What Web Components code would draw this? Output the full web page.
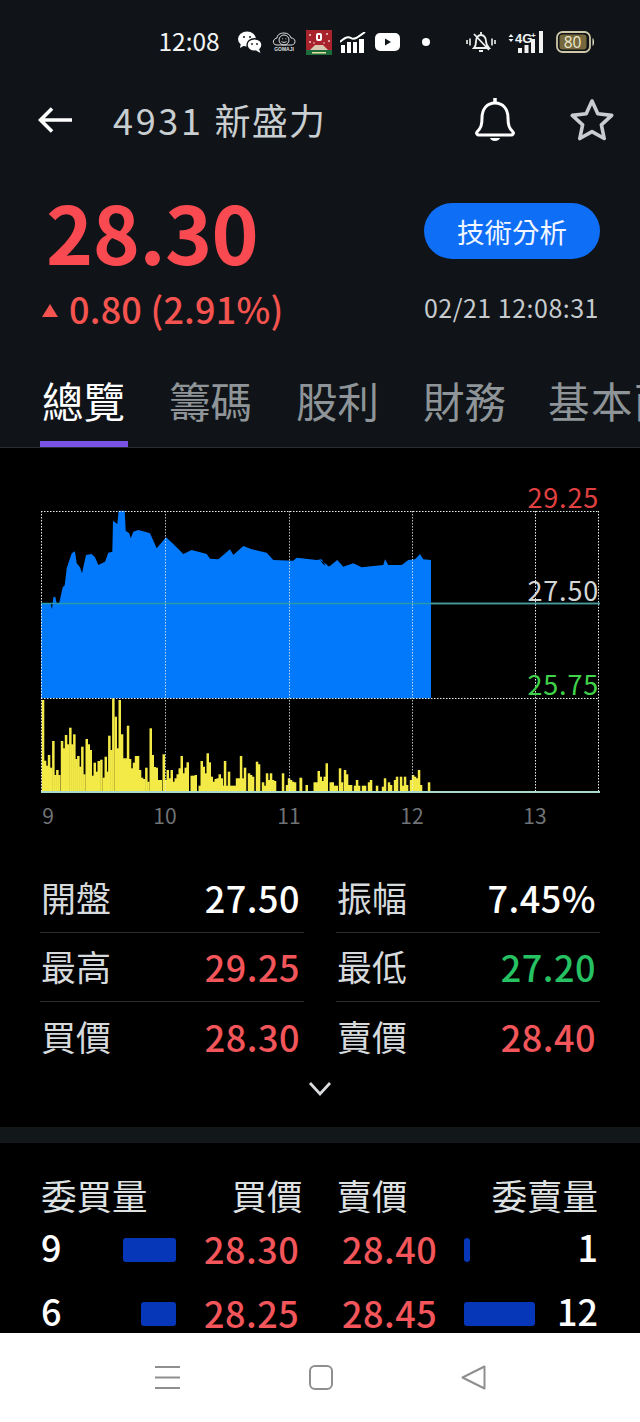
<!DOCTYPE html>
<html lang="zh-Hant"><head><meta charset="utf-8"><title>4931 新盛力</title>
<style>
html,body{margin:0;padding:0;background:#000}
body{width:640px;height:1422px;overflow:hidden;display:flex;flex-direction:column;font-family:"Noto Sans CJK TC","Noto Sans",sans-serif;color:#fff}
</style></head><body>
<status-bar></status-bar>
<stock-header></stock-header>
<tab-bar></tab-bar>
<stock-chart></stock-chart>
<stat-grid></stat-grid>
<order-book></order-book>
<nav-bar></nav-bar>
<script>
const el=(name,html)=>customElements.define(name,class extends HTMLElement{constructor(){super();this.attachShadow({mode:'open'}).innerHTML=typeof html==='function'?html():html}});

el('status-bar',`<style>
:host{display:flex;flex:none;align-items:center;height:84px;box-sizing:border-box;background:#101418;padding:0 0 0 158.500px;color:#fff}
.t{font-size:24.500px;width:79.500px;line-height:1;color:#f2f4f4;margin-top:-1px}
svg{display:block;flex:none}
</style>
<span class="t">12:08</span>
<svg width="24" height="22" viewBox="0 0 24 22" fill="#fff"><ellipse cx="9" cy="8" rx="9" ry="7.5"/><path d="M3 12l-1 5 5-3z"/><ellipse cx="16.5" cy="14" rx="7.5" ry="6.3" stroke="#101418" stroke-width="1.4"/><path d="M21 18l1.5 4-4.500-2.500z"/><circle cx="6" cy="6" r="1" fill="#101418"/><circle cx="12" cy="6" r="1" fill="#101418"/><circle cx="14" cy="13" r=".9" fill="#101418"/><circle cx="19" cy="13" r=".9" fill="#101418"/></svg>
<svg style="margin-left:10px" width="24" height="24" viewBox="0 0 24 24" fill="none" stroke="#ddd" stroke-width="1"><path d="M5 15c-3 0-4-2-3.500-4S4 8 5 8c0-3 3-5 7-5s6 2 7 5c2 0 4 1 4 3.500S21 15 19 15z"/><circle cx="12" cy="10" r="5"/><path d="M9.500 11.500c1.500 1.200 3.500 1.200 5 0M10 8.800h.8M13.500 8.800h.8"/><text x="12" y="21" font-size="5" font-weight="700" fill="#ddd" stroke="none" text-anchor="middle" font-family="Liberation Sans">GOMAJI</text></svg>
<svg style="margin-left:10px" width="26" height="25" viewBox="0 0 26 25"><rect width="26" height="25" fill="#a8232c"/><rect y="20" width="26" height="5" fill="#1c6b3a"/><path d="M4 20l5-5h8l5 5z" fill="#d9c9b0"/><rect x="10" y="3" width="6" height="8" rx="2" fill="#fff"/><rect x="12" y="5" width="2" height="4" fill="#a8232c"/><g fill="#f2d0d0"><circle cx="4" cy="5" r="1"/><circle cx="21" cy="4" r="1"/><circle cx="23" cy="11" r="1"/><circle cx="4" cy="12" r="1"/><circle cx="8" cy="13" r=".8"/><circle cx="18" cy="13" r=".8"/></g><rect x="6" y="22" width="14" height="1.500" fill="#e8e0a0"/></svg>
<svg style="margin-left:8px" width="26" height="21" viewBox="0 0 26 21" fill="#fff"><path d="M0 10C4 6 8 4 11 6s6 0 14-6" fill="none" stroke="#fff" stroke-width="2"/><rect x="1" y="13" width="4" height="8"/><rect x="7" y="10" width="4" height="11"/><rect x="13" y="10" width="4" height="11"/><rect x="19" y="7" width="5" height="14"/></svg>
<svg style="margin-left:9px" width="25" height="18" viewBox="0 0 25 18"><rect width="25" height="18" rx="5" fill="#fff"/><path d="M10 5.500v7l6-3.500z" fill="#101418"/></svg>
<svg style="margin-left:21px" width="10" height="10" viewBox="0 0 10 10"><circle cx="5" cy="5" r="4" fill="#fff"/></svg>
<svg style="margin-left:35px" width="30" height="22" viewBox="0 0 30 22" fill="none" stroke="#f0f0f0" stroke-width="1.800"><path d="M8 17c2-2 2-4 2-7s2-6 5-6 5 3 5 6 1 5 3 7zM15 1v3M13 20h4M8 3l15 16"/><path d="M1 9v4M4 7.500v7M26 7.500v7M29 9v4" stroke-width="1.600"/></svg>
<svg style="margin-left:9px" width="39" height="22" viewBox="0 0 39 22" fill="#f2f2f2"><path d="M6 3l2.500 3h-5zM6 11l2.500-3h-5z"/><text x="10" y="12" font-size="13" font-weight="700" font-family="Liberation Sans">4G</text><text x="26" y="7" font-size="8" font-weight="700" font-family="Liberation Sans">+</text><rect x="13" y="17" width="4" height="5"/><rect x="19.500" y="14" width="4" height="8"/><rect x="26" y="8" width="4" height="14"/><rect x="34" y="0" width="4" height="22"/></svg>
<svg style="margin-left:12px" width="40" height="22" viewBox="0 0 40 22"><rect x="1" y="1" width="33" height="20" rx="5.500" fill="#101418" stroke="#cfc8a8" stroke-width="1.800"/><rect x="3.500" y="3.500" width="27" height="15" rx="3" fill="#75683c"/><text x="16.500" y="16.500" font-size="15.500" fill="#e8e4c8" text-anchor="middle" font-family="Noto Sans">80</text><path d="M36.500 7c2 1 2 7 0 8z" fill="#e8e4c8"/></svg>`);

el('stock-header',`<style>
:host{display:block;flex:none;background:#101418;height:280px;box-sizing:border-box}
.top{display:flex;align-items:center;height:72px;padding-left:38px}
.title{font-size:36px;line-height:1;color:#c9ced1;margin-left:41px;flex:1;letter-spacing:1.300px;margin-top:-3px}
.title b{font-weight:400;letter-spacing:2.700px}
svg{display:block;flex:none}
.mid{display:flex;justify-content:space-between;padding:26px 40px 0 46px;height:92px;align-items:flex-start}
.price{font-size:80px;font-weight:700;line-height:72px;color:#f94a51;margin-top:12px;letter-spacing:-.500px}
.btn{width:176px;height:56px;border-radius:28px;background:#0f6ef6;color:#f1f6ff;font-size:27.500px;line-height:56px;text-align:center;margin-top:21px}
.sub{display:flex;justify-content:space-between;align-items:center;padding:0 41px 0 42px;height:46px;margin-top:10px}
.chg{display:flex;align-items:center;color:#f4534f;font-size:36px;font-weight:500;line-height:46px;position:relative;top:1px;letter-spacing:.2px}
.tri{width:0;height:0;border:8.500px solid transparent;border-top:0;border-bottom:13px solid #f4534f;margin:4px 11px 0 0}
.date{font-size:25px;color:#c6cbce;letter-spacing:.500px}
</style>
<div class="top">
<svg width="34" height="26" viewBox="0 0 34 26" fill="none" stroke="#fff" stroke-width="3.600"><path d="M34 13H3M14 1.500L2.500 13 14 24.500"/></svg>
<span class="title"><b>4931 </b>新盛力</span>
<svg width="42" height="46" viewBox="0 0 42 46" fill="none" stroke="#fff" stroke-width="3"><path d="M3 35c4-4 5-7 5-14 0-9 5-15 13-15s13 6 13 15c0 7 1 10 5 14 1 1 0 3-2 3H5c-2 0-3-2-2-3z"/><path d="M21 1v4" stroke-width="3.500"/><path d="M16 41c1 4 9 4 10 0z" fill="#fff" stroke="none"/></svg>
<svg style="margin:0 26px 0 54px" width="44" height="44" viewBox="0 0 44 44" fill="none" stroke="#c9cdcf" stroke-width="3.600" stroke-linejoin="round"><path d="M22 3l5.800 12.800 13.900 1.600-10.300 9.400 2.800 13.700L22 33.600 9.800 40.500l2.800-13.700L2.300 17.400l13.900-1.600z"/></svg>
</div>
<div class="mid"><span class="price">28.30</span><span class="btn">技術分析</span></div>
<div class="sub"><span class="chg"><i class="tri"></i>0.80 (2.91%)</span><span class="date">02/21 12:08:31</span></div>`);

el('tab-bar',`<style>
:host{display:flex;flex:none;background:#101418;height:84px;box-sizing:border-box;border-bottom:1px solid #2a2e31;overflow:hidden;padding-left:40px;gap:39px;white-space:nowrap}
.t{flex:none;width:88px;text-align:center;font-size:41.500px;line-height:72px;height:83px;color:#8e9497;box-sizing:border-box;text-indent:-1px}
.a{color:#fff;border-bottom:6px solid #7a52e6}
.w{width:130px;text-align:left;text-indent:0;letter-spacing:1.500px}
</style><span class="t a">總覽</span><span class="t">籌碼</span><span class="t">股利</span><span class="t">財務</span><span class="t w">基本面</span>`);

el('stock-chart',()=>{
const A=[[33,370],[62,372],[66,388],[70,352],[76,350],[80,370],[88,368],[98,322],[104,316],[110,265],[125,220],[135,214],[140,250],[150,262],[156,280],[168,225],[185,222],[195,232],[205,255],[225,245],[235,218],[247,215],[249,122],[262,132],[266,92],[284,92],[287,152],[298,160],[302,175],[310,155],[325,150],[345,155],[360,160],[380,205],[408,172],[430,192],[460,222],[485,210],[530,222],[540,236],[565,238],[600,208],[610,225],[640,198],[665,208],[710,218],[730,240],[790,242],[800,233],[860,240],[875,238],[885,255],[900,260]].map(p=>[30+p[0]/3,480+p[1]/3]);
const B=[[0,240],[12,255],[30,258],[52,240],[70,260],[100,250],[125,262],[190,255],[195,238],[205,255],[245,255],[265,240],[285,238],[300,222],[310,238],[333,240],[333,655]].map(p=>[320+p[0]/3,480+p[1]/3]);
const pts=[...A,...B,[41,698]].map(p=>p[0].toFixed(1)+','+p[1].toFixed(1)).join(' ');
const Z7='15:15 21:197 27:212 33:180 39:218 46:138 52:240 58:225 64:240 72:138 78:160 84:120 90:148 97:98 103:148 109:118 115:192 121:183 127:215 133:155 139:238 146:132 152:148 158:165 164:242 170:203 176:230 182:198 190:194 197:248 203:185 209:230 214:122 220:165 226:10 233:65 239:160 245:15 252:118 258:190 264:190 270:92 276:192 282:220 288:203 294:183 300:183 306:225 312:248 318:252 325:218 331:260 338:100 344:180 350:216 356:218 362:255 368:255 377:178 383:255 389:225 395:250';
const Z8='5:75 11:110 17:100 23:88 29:70 35:33 41:85 47:68 53:52 65:92 71:92 77:90 89:122 95:48 101:65 107:85 113:25 119:52 125:95 131:110 137:102 143:100 149:88 155:100 161:122 165:48 171:122 177:80 183:122 189:122 195:122 201:100 207:100 213:33 219:100 225:68 237:85 243:90 249:95 261:50 267:58 279:112 285:122 291:85 297:105 303:85 309:105 315:108 339:85 351:120 357:100 363:105 369:110 375:112 393:100';
const Z9='2:98 20:120 44:112 50:112 56:78 62:95 68:108 74:95 80:55 92:112 98:112 104:122 110:122 120:70 126:112 135:75 141:88 147:120 153:120 165:122 171:105 177:122 189:122 195:122 207:112 213:105 231:122 249:125 255:100 267:112 273:120 285:105 291:95 303:95 309:122 315:95 321:120 333:105 339:90 345:95 351:100 357:75 363:120 387:112';
let bars='';
const add=(s,x0,y0)=>s.split(' ').forEach(e=>{const[a,b]=e.split(':').map(Number);const x=x0+a/3-1.2,y=y0+b/3;bars+=`<rect x="${x.toFixed(1)}" y="${y.toFixed(1)}" width="2.500" height="${(792-y).toFixed(1)}"/>`});
add(Z7,38,695);add(Z8,170,745);add(Z9,300,745);
const vs=[41,165,289,412,535,598];
const lab=(x,y,c,t)=>`<text x="${x}" y="${y}" fill="${c}" font-size="27" text-anchor="end" letter-spacing=".8">${t}</text>`;
return `<style>:host{display:block;flex:none;background:#000;height:392px}svg{display:block;font-family:"Noto Sans CJK TC","Noto Sans",sans-serif}</style>
<svg width="640" height="392" viewBox="0 448 640 392">
<polygon points="${pts}" fill="#0279fa"/>
<g fill="#f3ea47">${bars}</g>
<g stroke="#e6eef0" stroke-width="1" stroke-dasharray="1.500 1.500" fill="none">
${vs.map(x=>`<path d="M${x+.5} 511V792" ${x==289||x==165||x==412?'stroke-opacity=".8"':''}/>`).join('')}
<path d="M41 511.500H599M41 698.500H599"/></g>
<path d="M41 603.500H600" stroke="#2a9aa6" stroke-width="1.500"/>
<path d="M431 603.500H600" stroke="#4f9a98" stroke-width="1.500"/>
<path d="M41 792H600" stroke="#a9dccf" stroke-width="2"/>
${lab(599,508,'#e0403f','29.25')}${lab(599,601,'#d4d6d6','27.50')}${lab(599,695,'#3fd24a','25.75')}
<g fill="#6f7375" font-size="21" text-anchor="middle"><text x="48" y="824">9</text><text x="165" y="824">10</text><text x="289" y="824">11</text><text x="412" y="824">12</text><text x="535" y="824">13</text></g>
</svg>`});

customElements.define('stat-cell',class extends HTMLElement{constructor(){super();const s=this.attachShadow({mode:'open'});
s.innerHTML=`<style>
:host{display:flex;justify-content:space-between;align-items:center;box-sizing:border-box;height:69.500px;padding:0 5px 0 1px;border-bottom:1px solid #2b2e31}
:host([last]){border-bottom:0}
.l{font-size:35px;color:#d6dadc;margin-top:-2px}
.v{font-size:36px;font-weight:500;letter-spacing:.500px;margin-right:-1px;margin-top:-1px;color:var(--c,#fff)}
</style><span class="l"><slot name="l"></slot></span><span class="v"><slot></slot></span>`}});

el('stat-grid',`<style>
:host{display:block;flex:none;background:#000;height:303px;box-sizing:border-box;padding:23px 40px 0;border-bottom:16px solid #12171a}
.g{display:grid;grid-template-columns:264px 264px;column-gap:32px}
.chev{display:flex;justify-content:center;margin-top:9px}
.r{--c:#f2555a}.gr{--c:#25c162}
</style><div class="g">
<stat-cell><span slot="l">開盤</span>27.50</stat-cell><stat-cell><span slot="l">振幅</span>7.45%</stat-cell>
<stat-cell class="r"><span slot="l">最高</span>29.25</stat-cell><stat-cell class="gr"><span slot="l">最低</span>27.20</stat-cell>
<stat-cell class="r" last><span slot="l">買價</span>28.30</stat-cell><stat-cell class="r" last><span slot="l">賣價</span>28.40</stat-cell>
</div><div class="chev"><svg width="24" height="16" viewBox="0 0 24 16" fill="none" stroke="#d8dcde" stroke-width="2.800"><path d="M2 2l10 11L22 2"/></svg></div>`);

customElements.define('book-row',class extends HTMLElement{constructor(){super();const s=this.attachShadow({mode:'open'});
const g=n=>this.getAttribute(n);
s.innerHTML=`<style>
:host{display:grid;grid-template-columns:82px 53px 28px 95px 43px 94px 28px 1fr;align-items:center;height:64px;font-size:36px}
span{line-height:38px}
.n{font-weight:500;color:#fff;white-space:nowrap;margin-top:-8px}
.p{font-weight:500;color:#f2555a;letter-spacing:.500px;white-space:nowrap;margin-top:-4px}
i{display:block;height:24px;background:#0637b8;border-radius:3px}
.b{justify-self:end}
.s{display:flex;justify-content:space-between;align-items:center}
.s span{margin-top:-8px;font-weight:500;color:#fff}
</style><span class="n">${g('a')}</span><i class="b" style="width:${g('aw')}px"></i><span></span><span class="p">${g('bp')}</span><span></span><span class="p">${g('sp')}</span><span></span>
<div class="s"><i style="width:${g('bw')}px"></i><span>${g('b')}</span></div>`}});

el('order-book',`<style>
:host{display:block;background:#000;flex:1;min-height:0;overflow:hidden;padding:26px 42px 0 41px;box-sizing:border-box}
.h2{display:flex;font-size:35.500px;line-height:52px;height:49px;color:#dfe2e3;justify-content:space-between}
.m{display:flex;gap:34px}
</style><div class="h2"><span>委買量</span><span class="m"><span>買價</span><span>賣價</span></span><span>委賣量</span></div>
<book-row a="9" aw="53" bp="28.30" sp="28.40" b="1" bw="6"></book-row>
<book-row a="6" aw="35" bp="28.25" sp="28.45" b="12" bw="71"></book-row>`);

el('nav-bar',`<style>
:host{display:flex;flex:none;height:89px;background:#fff;align-items:center;box-sizing:border-box;padding:0 154px 1px 155px;justify-content:space-between}
svg{display:block}
</style>
<svg width="26" height="25" viewBox="0 0 26 25" stroke="#8f8f8f" stroke-width="2" fill="none"><path d="M0 2h25M0 12.500h25M0 23h25"/></svg>
<svg width="24" height="25" viewBox="0 0 24 25" stroke="#8f8f8f" stroke-width="2" fill="none"><rect x="1" y="1" width="22" height="23" rx="5"/></svg>
<svg width="25" height="25" viewBox="0 0 25 25" stroke="#8f8f8f" stroke-width="2" fill="none" stroke-linejoin="round"><path d="M23.500 1.500v22L1.500 12.500z"/></svg>`);
</script>
</body></html>
